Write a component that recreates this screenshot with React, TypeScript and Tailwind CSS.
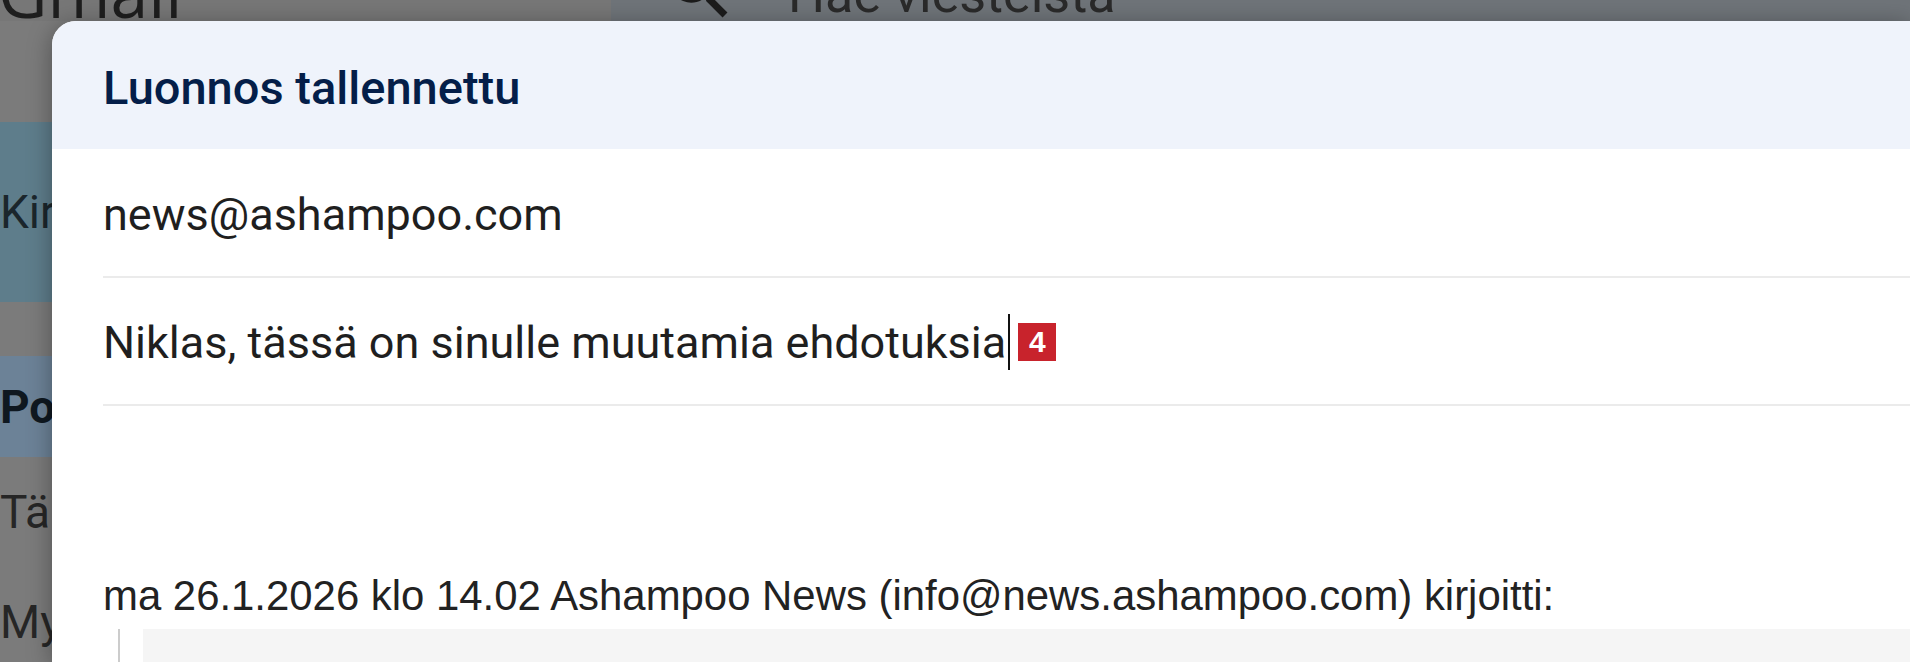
export default function App() {
  return (
    <div className="relative w-[1910px] h-[662px] overflow-hidden bg-[#7b7b7b] font-['Roboto',sans-serif]">
      {/* Gmail page behind the scrim */}
      <div className="flex flex-col h-full">
        <div className="h-[21px] shrink-0 flex overflow-hidden bg-[#777777]">
          <div className="w-[611px] shrink-0 overflow-hidden">
            <div className="-mt-[42px] -ml-[2px] text-[68px] leading-[68px] text-[#1e1e1e] font-['Open_Sans',sans-serif] whitespace-nowrap">
              Gmail
            </div>
          </div>
          <div className="flex-1 flex bg-[#6f7479] overflow-hidden">
            <svg
              viewBox="0 0 24 24"
              className="w-[79px] h-[79px] shrink-0 ml-[49px] -mt-[50px] fill-[#1c1c1c]"
            >
              <path d="M15.5 14h-.79l-.28-.27A6.471 6.471 0 0 0 16 9.5 6.5 6.5 0 1 0 9.5 16c1.61 0 3.09-.59 4.23-1.57l.27.28v.79l5 4.99L20.49 19l-4.99-5zm-6 0C7.01 14 5 11.99 5 9.5S7.01 5 9.5 5 14 7.01 14 9.5 11.99 14 9.5 14z" />
            </svg>
            <div className="ml-[49px] -mt-[31px] text-[52px] leading-[52px] text-[#2a2a2a] whitespace-nowrap">
              Hae viesteistä
            </div>
          </div>
        </div>
        <div className="w-[300px] shrink-0 flex flex-col pt-[101px]">
          <div className="h-[180px] shrink-0 bg-[#5e7d8b] rounded-r-[60px] flex items-center text-[46px] leading-none text-[#1b262c] whitespace-nowrap">
            Kirjoita
          </div>
          <div className="h-[54px] shrink-0" />
          <div className="h-[101px] shrink-0 bg-[#6c8297] rounded-r-[50px] flex items-center text-[46px] leading-none font-bold text-[#0f1820] whitespace-nowrap">
            Postilaatikko
          </div>
          <div className="h-[110px] shrink-0 flex items-center text-[46px] leading-none text-[#262626] whitespace-nowrap">
            Tähdellä merkityt
          </div>
          <div className="h-[110px] shrink-0 flex items-center text-[46px] leading-none text-[#262626] whitespace-nowrap">
            Myöhemmin
          </div>
        </div>
      </div>

      {/* Compose dialog */}
      <div className="absolute left-[52px] top-[21px] right-0 bottom-0 bg-white rounded-tl-[24px] overflow-hidden shadow-[0_4px_24px_rgba(0,0,0,0.35)] flex flex-col">
        <div className="h-[128px] shrink-0 bg-[#eff3fb] pl-[51px] pt-[43px]">
          <div className="text-[47px] leading-[47px] font-medium text-[#041e49] whitespace-nowrap">
            Luonnos tallennettu
          </div>
        </div>
        <div className="ml-[51px] flex flex-col">
          <div className="h-[129px] shrink-0 border-b-2 border-[#ebebeb] pt-[43px]">
            <div className="text-[45px] leading-[45px] text-[#1f1f1f] whitespace-nowrap">
              news@ashampoo.com
            </div>
          </div>
          <div className="h-[128px] shrink-0 border-b-2 border-[#ebebeb] pt-[42px] flex items-start">
            <span className="text-[45px] leading-[45px] text-[#1f1f1f] whitespace-nowrap">
              Niklas, tässä on sinulle muutamia ehdotuksia
            </span>
            <span className="block w-[2px] h-[56px] bg-[#111] ml-[2px] -mt-[6px]" />
            <span className="block w-[38px] h-[38px] ml-[8px] mt-[3px] bg-[#c8232c] text-white text-center text-[30px] leading-[38px] font-bold font-['Liberation_Sans',Arial,sans-serif]">
              4
            </span>
          </div>
          <div className="pt-[169px] font-['Liberation_Sans',Arial,sans-serif]">
            <div className="text-[41.9px] leading-[42px] text-[#222] whitespace-nowrap">
              ma 26.1.2026 klo 14.02 Ashampoo News (info@news.ashampoo.com) kirjoitti:
            </div>
            <div className="mt-[12px] ml-[15px] border-l-2 border-[#cccccc] pl-[23px]">
              <div className="h-[120px] bg-[#f5f5f5]" />
            </div>
          </div>
        </div>
      </div>
    </div>
  );
}
